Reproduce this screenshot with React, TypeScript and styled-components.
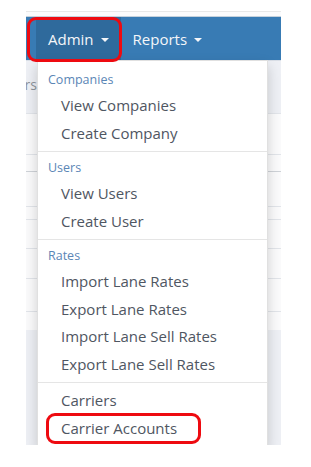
import styled, { createGlobalStyle } from "styled-components";

const GlobalStyle = createGlobalStyle`
  body {
    margin: 0;
    background: #ffffff;
    font-family: "Open Sans", "Noto Sans", sans-serif;
  }
`;

// page that holds the cropped screenshot
const Page = styled.div`
  padding: 11px 0 0 26px;
  width: 255px;
`;

const Frame = styled.div`
  position: relative;
  width: 255px;
  height: 434px;
  overflow: hidden;
  border-top: 1px solid #e8e8e8;
  box-sizing: border-box;
  background: #fbfbfc;
`;

const Gap = styled.div`
  height: 4px;
`;

// top navigation bar
const Navbar = styled.nav`
  display: flex;
  height: 43px;
  padding-left: 10px;
  background: #387bb4;
  border-top: 1px solid #c5d1dc;
  border-bottom: 1px solid #d9dee6;
`;

const NavItem = styled.div<{ $active?: boolean }>`
  display: flex;
  align-items: center;
  gap: 7px;
  padding: 0 12px;
  font-size: 15px;
  color: #f4f6f9;
  background: ${(p) => (p.$active ? "#2f6a9c" : "transparent")};
`;

const Caret = styled.span`
  width: 0;
  height: 0;
  margin-top: 2px;
  border-top: 4px solid #f4f6f9;
  border-left: 4px solid transparent;
  border-right: 4px solid transparent;
`;

// red annotation rings drawn over the screenshot
const Highlight = styled.div<{ $left: number; $top: number; $w: number; $h: number }>`
  position: absolute;
  left: ${(p) => p.$left}px;
  top: ${(p) => p.$top}px;
  width: ${(p) => p.$w}px;
  height: ${(p) => p.$h}px;
  box-sizing: border-box;
  border: 3px solid #ee0a10;
  border-radius: 9px;
  pointer-events: none;
`;

// table rows showing behind the dropdown
const Backdrop = styled.div`
  display: flex;
  flex-direction: column;
`;

const BgRow = styled.div<{ $h: number; $tone?: "blue" | "white"; $line?: string }>`
  height: ${(p) => p.$h}px;
  flex-shrink: 0;
  display: flex;
  align-items: center;
  background: ${(p) => (p.$tone === "blue" ? "#eef0f5" : "#fbfbfc")};
  border-bottom: 1px solid ${(p) => p.$line ?? "#e2e5ea"};
`;

const ClippedCell = styled.div`
  width: 11px;
  display: flex;
  justify-content: flex-end;
  overflow: hidden;
  white-space: nowrap;
  font-size: 14px;
  color: #8f959c;
  margin-top: -6px;
`;

// dropdown menu
const Menu = styled.div`
  position: absolute;
  left: 11px;
  top: 48px;
  width: 231px;
  padding: 7px 0 3px;
  box-sizing: border-box;
  background: #ffffff;
  border: 1px solid rgba(0, 0, 0, 0.12);
  box-shadow: 0 6px 12px rgba(0, 0, 0, 0.18);
`;

const MenuHeader = styled.div`
  padding: 0 10px;
  font-size: 12.5px;
  line-height: 24px;
  color: #5b86b6;
`;

const MenuItem = styled.div`
  position: relative;
  padding: 0 23px;
  font-size: 15px;
  line-height: 27.5px;
  color: #4f5662;
  white-space: nowrap;
`;

const Divider = styled.div`
  height: 1px;
  margin: 4px 0 4px;
  background: #e5e5e5;
`;

const sections = [
  { title: "Companies", items: ["View Companies", "Create Company"] },
  { title: "Users", items: ["View Users", "Create User"] },
  {
    title: "Rates",
    items: [
      "Import Lane Rates",
      "Export Lane Rates",
      "Import Lane Sell Rates",
      "Export Lane Sell Rates",
    ],
  },
];

const App = () => {
  return (
    <>
      <GlobalStyle />
      <Page>
        <Frame>
          <Gap />
          <Navbar>
            <NavItem $active>
              Admin <Caret />
            </NavItem>
            <NavItem>
              Reports <Caret />
            </NavItem>
          </Navbar>

          <Backdrop>
            <BgRow $h={52} $tone="blue">
              <ClippedCell>Carriers</ClippedCell>
            </BgRow>
            <BgRow $h={40} />
            <BgRow $h={16} $line="#cfd3d8" />
            <BgRow $h={34} />
            <BgRow $h={12} />
            <BgRow $h={28} />
            <BgRow $h={29} />
            <BgRow $h={32} />
            <BgRow $h={17} $line="transparent" />
            <BgRow $h={120} $tone="blue" $line="transparent" />
          </Backdrop>

          <Menu>
            {sections.map((s, i) => (
              <div key={s.title}>
                {i > 0 && <Divider />}
                <MenuHeader>{s.title}</MenuHeader>
                {s.items.map((item) => (
                  <MenuItem key={item}>{item}</MenuItem>
                ))}
              </div>
            ))}
            <Divider />
            <MenuItem>Carriers</MenuItem>
            <MenuItem>
              Carrier Accounts
              <Highlight $left={8} $top={-2} $w={155} $h={31} />
            </MenuItem>
          </Menu>

          <Highlight $left={1} $top={5} $w={95} $h={45} />
        </Frame>
      </Page>
    </>
  );
};

export default App;
